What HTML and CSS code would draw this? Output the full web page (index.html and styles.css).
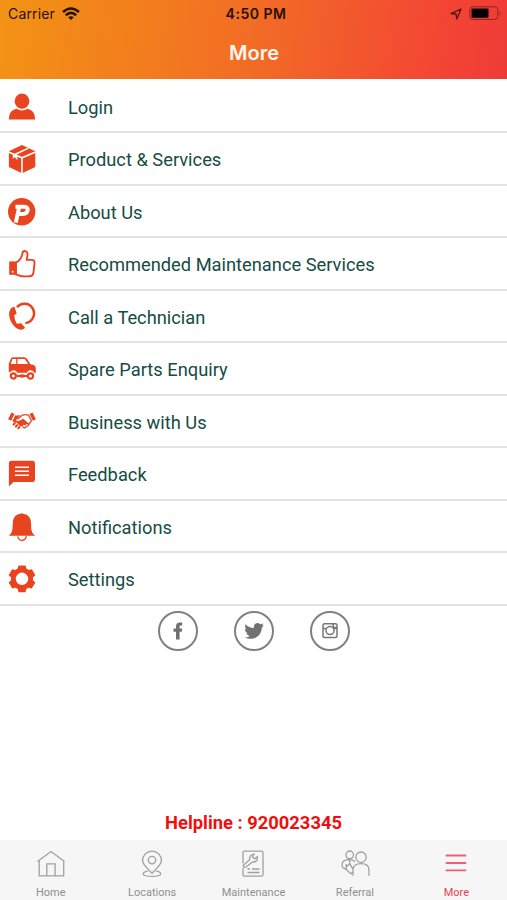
FILE: index.html
```html
<!DOCTYPE html>
<html lang="en">
<head>
<meta charset="utf-8">
<title>More</title>
<link rel="stylesheet" href="styles.css">
</head>
<body>
<div class="app">
  <header class="header">
    <div class="status">
      <div class="carrier"><span>Carrier</span>
        <svg width="18" height="14" viewBox="0 0 18 14"><g fill="none" stroke="#26120a" stroke-width="2.5"><path d="M1 5Q9-2 17 5"/><path d="M3.8 8.2Q9 3.5 14.2 8.2"/></g><path d="M6.2 10.3Q9 8 11.8 10.3L9 13Z" fill="#26120a"/></svg>
      </div>
      <div class="clock">4:50 PM</div>
      <div class="power">
        <svg width="12" height="12" viewBox="0 0 12 12"><path d="M1 5.6 11 1 6.8 11 6 6Z" fill="none" stroke="#4b160b" stroke-width="1.3" stroke-linejoin="round"/></svg>
        <svg width="33" height="15" viewBox="0 0 33 15"><rect x=".8" y=".8" width="28" height="12.6" rx="3" fill="none" stroke="#86291c"/><rect x="2.5" y="2.5" width="17" height="9.2" rx="1" fill="#050000"/><path d="M30.5 5q2 2.3 0 4.5Z" fill="#86291c"/></svg>
      </div>
    </div>
    <h1 class="title">More</h1>
  </header>
  <main class="main">
    <ul class="menu">
      <li class="row"><svg class="icon" viewBox="0 0 28 28"><ellipse cx="14" cy="8.2" rx="7.3" ry="7.6"/><path d="M.8 26.6Q.8 17 8.5 15.8q5.5 3.4 11 0Q27 17 27.2 26.6Z"/></svg><span>Login</span></li>
      <li class="row"><svg class="icon" viewBox="0 0 28 28"><path d="M14 0 27.3 6.2V22L14 28.3.9 22V6.2Z"/><path d="M14 28.3V12.8M.5 6.9 14 12.8 27.5 6.9M6.9 9.5 20.4 3.1" fill="none" stroke="#fff" stroke-width="1.6"/><path d="M4.8 8.2v5.6l2-1.5 2.6 3V10.4Z" fill="#fff"/></svg><span>Product &amp; Services</span></li>
      <li class="row"><svg class="icon" viewBox="0 0 28 28"><circle cx="13.7" cy="13.8" r="13.7"/><path d="M7.5 8.7h8.8c5.2 0 4.1 7.2-1.2 7.2h-4.8M11.3 8.3 7.8 24.6" fill="none" stroke="#fff" stroke-width="4"/></svg><span>About Us</span></li>
      <li class="row"><svg class="icon" viewBox="0 0 28 28"><path d="M1.2 11.4h6.5v13.4H1.2Z"/><path d="M8 12.3q4.6-2 6.2-7.9.3-3.4 2.4-3.4 3.4 0 2.8 5l-.8 3.9h5.2q3 0 2.7 3.4l-1.1 9.5q-.5 3.4-4 3.4-7.5.6-10-.6L8 24.4Z" fill="none" stroke="#e8441f" stroke-width="1.9" stroke-linejoin="round"/><circle cx="4.7" cy="21.8" r="1" fill="#fff"/></svg><span>Recommended Maintenance Services</span></li>
      <li class="row"><svg class="icon" viewBox="0 0 28 28"><path d="M6.6 4.1Q4.2 3.6 2.5 6-.4 10.8 2.7 18q3.2 6.8 9 8.6 3.4.8 5.3-2l-3.8-4.3-4.3.5Q6.3 17 6.2 12.3l2.5-1.8Z"/><path d="M9 4.1A9.7 9.7 0 1 1 17.4 20.1" fill="none" stroke="#e8441f" stroke-width="2.5"/></svg><span>Call a Technician</span></li>
      <li class="row"><svg class="icon" viewBox="0 0 28 28"><path d="M.8 17V8.5L3 3.5Q3.6 2.2 5.4 2.2h10.8q1.7 0 2.7 1.5l3.5 5.5q5.4.5 5.4 4.1v4.4h-1.8q-.8-2.4-3.5-2.4t-3.6 2.4H9.2q-.8-2.4-3.6-2.4-2.5 0-3.4 2Z"/><path d="M2.7 9 4.5 3.9h3.7V9Zm6.8 0V3.9h6.6q.8 0 1.4 1L20.1 9Z" fill="#fff"/><g fill="none" stroke="#e8441f" stroke-width="2.1"><circle cx="5.3" cy="21" r="2.6"/><circle cx="22.5" cy="21" r="2.6"/><path d="M8.6 21h10.5"/></g><ellipse cx="14" cy="21" rx="2.8" ry="1.7"/></svg><span>Spare Parts Enquiry</span></li>
      <li class="row"><svg class="icon" viewBox="0 0 28 28"><path d="m3.5 4.4 3 1.6-3.4 6.8L.1 11.2ZM24.5 4.4l3.4 6.8-3 1.6L21.5 6Z"/><path d="M7.4 7.2q3 .7 5.6-.4l-4.8 4.9q.5 2.9 4.7.4l2.3-1.3 6 5-1.2.9-1.7-.8-.9 1.6-1.9-.7-1 1.6-3.1-.6-2.5-3-2.5-.2-2-1.5Z"/><path d="m14.6 18.6 1.2 1.1q2 .7 2.5-1.4 2.2.2 2-1.7 2-.6.9-2.1M9.2 11.3l5.4-4.2q3-1.1 5.9.1l3 5.6-1.6 2" fill="none" stroke="#e8441f" stroke-width="1.3"/><path d="m5.6 16.5 1.2-1.2M7.9 18.5l1.2-1.3M10.3 20.3l1.2-1.3" stroke="#e8441f" stroke-width="2.1" stroke-linecap="round"/></svg><span>Business with Us</span></li>
      <li class="row"><svg class="icon" viewBox="0 0 28 28"><path d="M3.4.7h21.2Q27 .7 27 3.2v16.6q0 2.2-2.4 2.2H5.5L.9 26.5V3.2Q.9.7 3.4.7Z"/><path d="M7 7.3h14M7 11.3h14M7 15.3h14" stroke="#fff" stroke-width="1.5"/></svg><span>Feedback</span></li>
      <li class="row"><svg class="icon" viewBox="0 0 28 28"><path d="M12.3.8q1.5-1.2 3 0c5 .8 7.6 4.3 7.7 9.1l.2 6.3q.5 3.9 3.8 6.5H.9q3.2-2.8 3.6-6.5l.3-6.3C5 4.9 7.4 1.6 12.3.8Z"/><path d="M9.8 23.2q.4 4.1 4.2 4.1t4.3-4.1" fill="none" stroke="#e8441f" stroke-width="1.3"/></svg><span>Notifications</span></li>
      <li class="row"><svg class="icon" viewBox="0 0 28 28"><circle cx="14" cy="13.8" r="8.6" fill="none" stroke="#e8441f" stroke-width="4.7"/><g stroke="#e8441f" stroke-width="1.5" stroke-linejoin="round"><path d="m10.3 4.8.7-3.6h6l.7 3.6ZM10.3 22.8l.7 3.6h6l.7-3.6Z"/><path d="m10.3 4.8.7-3.6h6l.7 3.6ZM10.3 22.8l.7 3.6h6l.7-3.6Z" transform="rotate(60 14 13.8)"/><path d="m10.3 4.8.7-3.6h6l.7 3.6ZM10.3 22.8l.7 3.6h6l.7-3.6Z" transform="rotate(120 14 13.8)"/></g></svg><span>Settings</span></li>
    </ul>
    <div class="social">
      <span class="bubble"><svg width="20" height="20" viewBox="0 0 20 20"><path d="M8 18.4v-7.6H5.5V7.6H8v-2c0-3.4 1.8-4.6 6.2-4v3c-2.2-.2-2.6.1-2.6 1.5v1.5h2.6l-.4 3.2h-2.2v7.6Z"/></svg></span>
      <span class="bubble"><svg width="20" height="20" viewBox="0 0 20 20"><path d="M1.5 3.2Q5 7 9.9 7C9.5 2.1 13.9.7 16.2 3.2l3.2-.8-1.5 2.2 2-.3-2.1 2.5C17.6 15 9.6 20.5.6 16.4q3.2 0 5.2-1.5-2.7-.4-3.6-2.6h1.7Q.9 10.9.7 8l1.8.4Q.3 6.5 1.5 3.2Z"/></svg></span>
      <span class="bubble"><svg width="18" height="18" viewBox="0 0 18 18" class="outline"><rect x="2" y="1.7" width="14" height="13.7" rx="1.5"/><path d="M2 6.5h3M12 6.5h4M12.2 2v3.5H16"/><circle cx="9" cy="8.6" r="4"/></svg></span>
    </div>
    <p class="helpline">Helpline : 920023345</p>
  </main>
  <nav class="tabs">
    <div class="tab"><svg class="tab-icon" viewBox="0 0 30 30"><path d="M1.5 11.5 15 1.5 28.5 11.5M3.2 11v14.8h24.5V11M10.8 25.5V13.8h8.3v11.7"/></svg><span>Home</span></div>
    <div class="tab"><svg class="tab-icon" viewBox="0 0 30 30"><path d="M15 23.2Q5.5 14.5 5.5 10.6a9.5 9.5 0 0 1 19 0Q24.5 14.5 15 23.2ZM11 21.1q-5 .7-4.8 3 .7 2.3 8.8 2.3t8.7-2.3q.3-2.3-4.7-3"/><circle cx="15" cy="10.1" r="3.7"/></svg><span>Locations</span></div>
    <div class="tab"><svg class="tab-icon" viewBox="0 0 30 30"><path d="M5 13.5V2.7q0-1.5 1.5-1.5h17q1.5 0 1.5 1.5v22q0 1.5-1.5 1.5h-17Q5 26.2 5 24.7v-7M9.5 19H12M14 19h7.5M9.5 22.5h12"/><path d="M5.2 15.5 11.8 9.4q-.7-4.4 4.2-5.3L14.5 7l2.3 2 2.5-2.3q1 5.3-5.1 5.5L8 17Q5.8 18 5.2 15.5Z"/></svg><span>Maintenance</span></div>
    <div class="tab"><svg class="tab-icon" viewBox="0 0 30 30"><circle cx="9.7" cy="4.8" r="3.8"/><circle cx="21" cy="7.2" r="5.2"/><path d="M13 25.7V20q0-6.3 8-6.3t8 6.3v5.7M2.2 17.2V14q.2-4.3 7.3-4.3 3.8 0 5.5 2.2M2.2 17.2l4 2.3 4.8 4.4 1.5-1.8M6.2 19.5V14M6.5 16.7l3.3-2.9 3.2 5.4M9.7 10v3.6"/></svg><span>Referral</span></div>
    <div class="tab active"><svg class="tab-icon" viewBox="0 0 30 30"><path d="M4.7 5.5h20.5M4.7 13h20.5M4.7 20.4h20.5"/></svg><span>More</span></div>
  </nav>
</div>
</body>
</html>
```

FILE: styles.css
```css
* { box-sizing: border-box; }
body { margin: 0; background: #fff; font-family: Roboto, "Liberation Sans", sans-serif; }
.app { height: 900px; display: flex; flex-direction: column; }
.header { height: 79px; background: linear-gradient(98deg, #f39314 0%, #f26d25 49%, #f44435 87%, #ef3b36 100%); }
.status { height: 27px; display: grid; grid-template-columns: 1fr auto 1fr; align-items: center; padding: 0 5px 0 8px; font: 14px Inter, sans-serif; color: #26120a; }
.carrier { display: flex; align-items: center; gap: 7px; letter-spacing: .15px; }
.clock { font-weight: 600; letter-spacing: .5px; padding-left: 2px; }
.power { display: flex; align-items: center; justify-content: flex-end; gap: 7px; }
.title { margin: 0; padding-top: 12px; color: #fff6ed; font: 600 20px/28px Inter, sans-serif; text-align: center; text-indent: 1px; }
.main { flex: 1; display: flex; flex-direction: column; }
.menu { list-style: none; margin: 0; padding: 1.5px 0 0; }
.row { height: 52.5px; display: flex; align-items: center; padding: 2px 8px 0; gap: 32px; border-bottom: 2px solid #e2e3e3; font-size: 18.3px; color: #154c43; }
.row span { padding-top: 1px; }
.icon { width: 28px; height: 28px; fill: #e8441f; flex: none; overflow: visible; }
.social { display: flex; justify-content: center; gap: 36px; padding-top: 5.5px; }
.bubble { width: 40px; height: 40px; border: 2px solid #808080; border-radius: 50%; display: flex; align-items: center; justify-content: center; fill: #717171; }
.outline { fill: none; stroke: #777; stroke-width: 1.5; }
.helpline { margin: auto 0 5px; color: #f20d0d; font-size: 18.35px; line-height: 24px; font-weight: 700; text-align: center; }
.tabs { height: 60px; display: grid; grid-template-columns: repeat(5, 1fr); background: #f6f6f6; }
.tab { display: flex; flex-direction: column; align-items: center; padding-top: 10px; gap: 6px; font-size: 11px; line-height: 14px; color: #8f8f8f; }
.tab-icon { width: 30px; height: 30px; fill: none; stroke: #a0a0a0; stroke-width: 1.3; }
.active { color: #ed3e55; }
.active .tab-icon { stroke: #ec6075; stroke-width: 1.8; }
```
